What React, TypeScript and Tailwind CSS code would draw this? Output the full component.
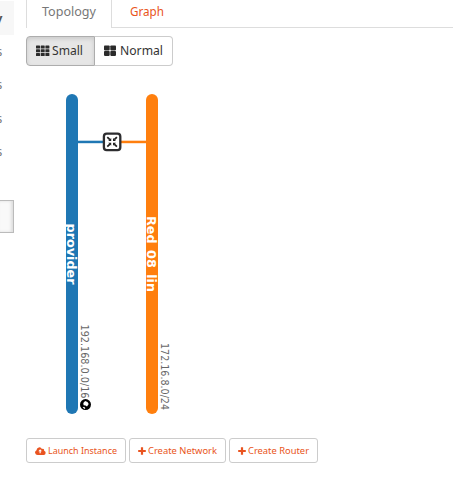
import React from "react";

const rowLabels = ["h-[33px]", "h-[34px]", "h-[33px]", "h-[34px]"];

function GridIcon({ columns }: { columns: 2 | 3 }) {
  return (
    <svg width="13" height="11" viewBox="0 0 13 11" fill="#2b2b2b" className="-mt-[2px] shrink-0 overflow-visible">
      {columns === 3
        ? [0.5, 4.2, 7.9].flatMap((y) =>
            [0, 4.7, 9.4].map((x) => <rect key={`${x}-${y}`} x={x} y={y} width="4" height="3.1" rx="0.5" />)
          )
        : [0.5, 6].flatMap((y) =>
            [0, 6.3].map((x) => <rect key={`${x}-${y}`} x={x} y={y} width="5.7" height="4.9" rx="0.8" />)
          )}
    </svg>
  );
}

function CloudIcon() {
  return (
    <svg width="11" height="8" viewBox="0 0 30 22" className="mr-[2px] shrink-0" fill="currentColor">
      <path
        fillRule="evenodd"
        d="M7 22a7 7 0 0 1-3-13.3A8 8 0 0 1 19 5.2a4.2 4.2 0 0 1 5.8 5.1A6 6 0 0 1 24 22zM14 6.5l-5 5.5h3.4v5.500h3.200v-5.500h3.400z"
      />
    </svg>
  );
}

function PlusIcon() {
  return (
    <svg width="8" height="8" viewBox="0 0 8 8" className="mr-[2px] shrink-0" fill="currentColor">
      <path d="M2.900 .3h2.200v2.600h2.700v2.200H5.100v2.600H2.900V5.100H.2V2.900h2.700z" />
    </svg>
  );
}

function Label({ text, width, height, size, y }: { text: string; width: number; height: number; size: number; y: number }) {
  return (
    <svg width={width} height={height} className="shrink-0 overflow-visible" fill="currentColor">
      <text x="0" y={y} fontSize={size} textLength={width} lengthAdjust="spacingAndGlyphs">
        {text}
      </text>
    </svg>
  );
}

function Topology() {
  return (
    <svg width="170" height="330" viewBox="26 89 170 330" className="block">
      <rect x="66" y="94" width="12" height="320" rx="6" fill="#1f77b4" />
      <rect x="146" y="94" width="12" height="320" rx="6" fill="#ff7f0e" />
      <rect x="78" y="140.7" width="27" height="2.5" fill="#1f77b4" />
      <rect x="119" y="140.7" width="27" height="2.5" fill="#ff7f0e" />

      <rect x="103.9" y="133.7" width="16.4" height="16.4" rx="2.8" fill="#fff" stroke="#2d2d2f" strokeWidth="2.3" />
      <g fill="#222">
        <path
          d="M107.3 137.100l2.600 2.600M116.900 137.100l-2.600 2.600M107.300 146.700l2.600-2.600M116.900 146.700l-2.600-2.600"
          stroke="#222"
          strokeWidth="1.700"
        />
        <path d="M111.200 138v3h-3zM113 138v3h3zM111.200 145.800v-3h-3zM113 145.800v-3h3z" />
      </g>

      <g fontFamily="'DejaVu Sans', sans-serif" fontWeight="700" fontSize="12" fill="#fff">
        <text transform="translate(67 223.5) rotate(90)" textLength="61" lengthAdjust="spacingAndGlyphs">
          provider
        </text>
        <text transform="translate(147 216) rotate(90)" textLength="76" lengthAdjust="spacingAndGlyphs">
          Red_08_lin
        </text>
      </g>
      <g fontFamily="'DejaVu Sans', sans-serif" fontSize="10" fill="#666">
        <text transform="translate(81.2 324.5) rotate(90)" textLength="74" lengthAdjust="spacingAndGlyphs">
          192.168.0.0/16
        </text>
        <text transform="translate(161.2 343) rotate(90)" textLength="67" lengthAdjust="spacingAndGlyphs">
          172.16.8.0/24
        </text>
      </g>

      <circle cx="85.5" cy="404.6" r="5.5" fill="#000" />
      <path d="M83.600 405.200l-.3-2.200 1.800-1.900 2.400.9 1.200 2-1.700 2.400-1.500-1z" fill="#fff" />
      <path d="M82.600 407.400l1.400-.6 1.300 1.100-.5 1z" fill="#fff" />
    </svg>
  );
}

const actions = [
  { label: "Launch Instance", icon: "cloud", width: "w-[100px]", text: 69 },
  { label: "Create Network", icon: "plus", width: "w-[97px]", text: 69 },
  { label: "Create Router", icon: "plus", width: "w-[89px]", text: 61 },
];

export default function App() {
  return (
    <div className="flex h-[498px] w-[453px] overflow-hidden bg-white font-['Noto_Sans',sans-serif]">
      <aside className="flex w-[14px] shrink-0 flex-col overflow-hidden text-[12px] text-[#777]">
        <div className="mt-px flex h-[34px] items-center bg-[#f7f7f7]">
          <span className="-ml-[5px] text-[13px] font-bold leading-none text-[#555]">y</span>
        </div>
        {rowLabels.map((h, i) => (
          <div key={i} className={`flex items-center ${h}`}>
            <span className="-ml-[3.5px] leading-none">s</span>
          </div>
        ))}
        <div className="mt-[31px] h-[33px] border border-l-0 border-[#bbb] bg-[#f9f9f9] shadow-[inset_-2px_0_3px_#ddd]" />
      </aside>

      <main className="ml-3 flex min-w-0 flex-1 flex-col">
        <nav className="flex h-[28px] shrink-0">
          <div className="flex w-[86px] border-x border-[#ddd] pl-[15px] pt-[5px] text-[#777]">
            <Label text="Topology" width={54} height={16} size={12.5} y={11} />
          </div>
          <div className="flex flex-1 border-b border-[#ddd] pl-[18px] pt-[5px] text-[#e95420]">
            <Label text="Graph" width={34} height={16} size={12.5} y={11} />
          </div>
        </nav>

        <div className="mt-2 flex h-[30px] w-[147px] shrink-0 text-[#333]">
          <button className="flex w-[69px] items-center gap-[3px] rounded-l-[4px] border border-[#adadad] bg-[#e6e6e6] pl-[9px] shadow-[inset_0_2px_4px_rgba(0,0,0,0.12)]">
            <GridIcon columns={3} />
            <Label text="Small" width={31} height={16} size={12.5} y={11.5} />
          </button>
          <button className="flex w-[78px] items-center gap-[3px] rounded-r-[4px] border border-l-0 border-[#ccc] bg-white pl-[9px]">
            <GridIcon columns={2} />
            <Label text="Normal" width={43} height={16} size={12.5} y={11.5} />
          </button>
        </div>

        <div className="mt-[23px]">
          <Topology />
        </div>

        <div className="mt-[19px] flex gap-[3px] text-[#e95420]">
          {actions.map((a) => (
            <button
              key={a.label}
              className={`flex h-[25px] items-center rounded-[3px] border border-[#ccc] bg-white pl-2 ${a.width}`}
            >
              {a.icon === "cloud" ? <CloudIcon /> : <PlusIcon />}
              <Label text={a.label} width={a.text} height={12} size={9.5} y={9} />
            </button>
          ))}
        </div>
      </main>
    </div>
  );
}
